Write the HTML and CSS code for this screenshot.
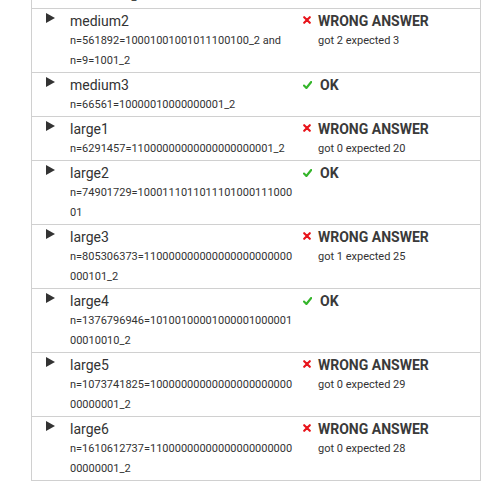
FILE: index.html
```html
<!DOCTYPE html>
<html>
<head>
<meta charset="utf-8">
<link rel="stylesheet" href="styles.css">
</head>
<body>
<div class="results">
  <div class="row">
    <div class="arrow"></div>
    <div class="case"><div class="name"></div><div class="detail">n=20=10100_2</div></div>
    <div class="status"></div>
  </div>
  <div class="row">
    <div class="arrow"><svg width="9" height="10" viewBox="0 0 9 10"><polygon points="0,0 9,5 0,10" fill="#333"/></svg></div>
    <div class="case"><div class="name">medium2</div><div class="detail">n=561892=10001001001011100100_2 and n=9=1001_2</div></div>
    <div class="status bad"><div class="verdict"><svg class="icon" width="8" height="8" viewBox="0 0 8 8"><path d="M1.2 1.2 L6.8 6.8 M6.8 1.2 L1.2 6.8" stroke="#e8141b" stroke-width="2.1" stroke-linecap="round"/></svg>WRONG ANSWER</div><div class="detail">got 2 expected 3</div></div>
  </div>
  <div class="row">
    <div class="arrow"><svg width="9" height="10" viewBox="0 0 9 10"><polygon points="0,0 9,5 0,10" fill="#333"/></svg></div>
    <div class="case"><div class="name">medium3</div><div class="detail">n=66561=10000010000000001_2</div></div>
    <div class="status good"><div class="verdict"><svg class="icon" width="9" height="8" viewBox="0 0 9 8"><path d="M1 4.6 L3.4 7 L8.2 1" fill="none" stroke="#34b52a" stroke-width="2.1" stroke-linecap="round" stroke-linejoin="round"/></svg>OK</div></div>
  </div>
  <div class="row">
    <div class="arrow"><svg width="9" height="10" viewBox="0 0 9 10"><polygon points="0,0 9,5 0,10" fill="#333"/></svg></div>
    <div class="case"><div class="name">large1</div><div class="detail">n=6291457=11000000000000000000001_2</div></div>
    <div class="status bad"><div class="verdict"><svg class="icon" width="8" height="8" viewBox="0 0 8 8"><path d="M1.2 1.2 L6.8 6.8 M6.8 1.2 L1.2 6.8" stroke="#e8141b" stroke-width="2.1" stroke-linecap="round"/></svg>WRONG ANSWER</div><div class="detail">got 0 expected 20</div></div>
  </div>
  <div class="row">
    <div class="arrow"><svg width="9" height="10" viewBox="0 0 9 10"><polygon points="0,0 9,5 0,10" fill="#333"/></svg></div>
    <div class="case"><div class="name">large2</div><div class="detail">n=74901729=100011101101110100011100001</div></div>
    <div class="status good"><div class="verdict"><svg class="icon" width="9" height="8" viewBox="0 0 9 8"><path d="M1 4.6 L3.4 7 L8.2 1" fill="none" stroke="#34b52a" stroke-width="2.1" stroke-linecap="round" stroke-linejoin="round"/></svg>OK</div></div>
  </div>
  <div class="row">
    <div class="arrow"><svg width="9" height="10" viewBox="0 0 9 10"><polygon points="0,0 9,5 0,10" fill="#333"/></svg></div>
    <div class="case"><div class="name">large3</div><div class="detail">n=805306373=110000000000000000000000000101_2</div></div>
    <div class="status bad"><div class="verdict"><svg class="icon" width="8" height="8" viewBox="0 0 8 8"><path d="M1.2 1.2 L6.8 6.8 M6.8 1.2 L1.2 6.8" stroke="#e8141b" stroke-width="2.1" stroke-linecap="round"/></svg>WRONG ANSWER</div><div class="detail">got 1 expected 25</div></div>
  </div>
  <div class="row">
    <div class="arrow"><svg width="9" height="10" viewBox="0 0 9 10"><polygon points="0,0 9,5 0,10" fill="#333"/></svg></div>
    <div class="case"><div class="name">large4</div><div class="detail">n=1376796946=1010010000100000100000100010010_2</div></div>
    <div class="status good"><div class="verdict"><svg class="icon" width="9" height="8" viewBox="0 0 9 8"><path d="M1 4.6 L3.4 7 L8.2 1" fill="none" stroke="#34b52a" stroke-width="2.1" stroke-linecap="round" stroke-linejoin="round"/></svg>OK</div></div>
  </div>
  <div class="row">
    <div class="arrow"><svg width="9" height="10" viewBox="0 0 9 10"><polygon points="0,0 9,5 0,10" fill="#333"/></svg></div>
    <div class="case"><div class="name">large5</div><div class="detail">n=1073741825=1000000000000000000000000000001_2</div></div>
    <div class="status bad"><div class="verdict"><svg class="icon" width="8" height="8" viewBox="0 0 8 8"><path d="M1.2 1.2 L6.8 6.8 M6.8 1.2 L1.2 6.8" stroke="#e8141b" stroke-width="2.1" stroke-linecap="round"/></svg>WRONG ANSWER</div><div class="detail">got 0 expected 29</div></div>
  </div>
  <div class="row">
    <div class="arrow"><svg width="9" height="10" viewBox="0 0 9 10"><polygon points="0,0 9,5 0,10" fill="#333"/></svg></div>
    <div class="case"><div class="name">large6</div><div class="detail">n=1610612737=1100000000000000000000000000001_2</div></div>
    <div class="status bad"><div class="verdict"><svg class="icon" width="8" height="8" viewBox="0 0 8 8"><path d="M1.2 1.2 L6.8 6.8 M6.8 1.2 L1.2 6.8" stroke="#e8141b" stroke-width="2.1" stroke-linecap="round"/></svg>WRONG ANSWER</div><div class="detail">got 0 expected 28</div></div>
  </div>
</div>
</body>
</html>
```

FILE: styles.css
```css
html, body {
  margin: 0;
  padding: 0;
  background: #fff;
}
body {
  font-family: Roboto, "Liberation Sans", sans-serif;
  color: #333;
}
.results {
  margin: -35px 0 0 31px;
  width: 448px;
  border-left: 1px solid #d0d0d0;
  border-right: 1px solid #d0d0d0;
}
.row {
  display: grid;
  grid-template-columns: 38px 233px 1fr;
  padding: 2px 0 1px;
  border-bottom: 1px solid #d0d0d0;
}
.arrow {
  padding: 2px 0 0 14px;
  line-height: 0;
}
.case {
  padding-right: 7px;
  min-width: 0;
}
.name {
  font-size: 14px;
  line-height: 20px;
  min-height: 20px;
}
.detail {
  font-size: 11px;
  line-height: 20px;
  overflow-wrap: break-word;
}
.verdict {
  font-size: 14px;
  font-weight: 700;
  line-height: 20px;
  color: #3a3a3a;
}
.icon {
  vertical-align: 2px;
  margin-right: 7px;
}
.good .icon {
  vertical-align: 1px;
  margin-right: 8px;
}
.status .detail {
  padding-left: 15px;
}
```
